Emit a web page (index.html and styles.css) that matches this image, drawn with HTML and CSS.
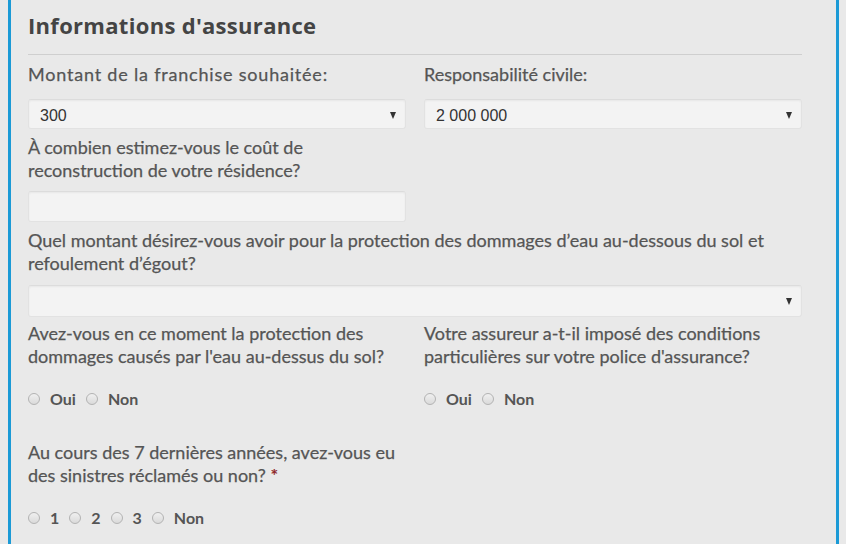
FILE: index.html
```html
<!DOCTYPE html>
<html lang="fr">
<head>
<meta charset="utf-8">
<title>Informations d'assurance</title>
<link rel="stylesheet" href="styles.css">
</head>
<body>
<div class="panel">
  <h2 class="title">Informations d'assurance</h2>
  <div class="rule"></div>

  <div class="row top">
    <div class="col">
      <label class="lbl wide-lbl">Montant de la franchise souhaitée:</label>
      <div class="select first"><span class="val">300</span></div>
    </div>
    <div class="col">
      <label class="lbl">Responsabilité civile:</label>
      <div class="select first"><span class="val">2 000 000</span></div>
    </div>
  </div>

  <div class="row">
    <div class="col">
      <label class="lbl">À combien estimez-vous le coût de reconstruction de votre résidence?</label>
      <div class="input"></div>
    </div>
    <div class="col"></div>
  </div>

  <div class="full">
    <label class="lbl">Quel montant désirez-vous avoir pour la protection des dommages d’eau au-dessous du sol et refoulement d’égout?</label>
    <div class="select wide"><span class="val"></span></div>
  </div>

  <div class="row">
    <div class="col">
      <label class="lbl">Avez-vous en ce moment la protection des dommages causés par l'eau au-dessus du sol?</label>
      <div class="radios">
        <span class="opt"><span class="dot"></span>Oui</span>
        <span class="opt"><span class="dot"></span>Non</span>
      </div>
    </div>
    <div class="col">
      <label class="lbl">Votre assureur a-t-il imposé des conditions particulières sur votre police d'assurance?</label>
      <div class="radios">
        <span class="opt"><span class="dot"></span>Oui</span>
        <span class="opt"><span class="dot"></span>Non</span>
      </div>
    </div>
  </div>

  <div class="row">
    <div class="col">
      <label class="lbl">Au cours des 7 dernières années, avez-vous eu des sinistres réclamés ou non? <span class="req">*</span></label>
      <div class="radios">
        <span class="opt"><span class="dot"></span>1</span>
        <span class="opt"><span class="dot"></span>2</span>
        <span class="opt"><span class="dot"></span>3</span>
        <span class="opt"><span class="dot"></span>Non</span>
      </div>
    </div>
    <div class="col"></div>
  </div>
</div>
</body>
</html>
```

FILE: styles.css
```css
html, body {
  background: #e9e9e9;
}
body {
  margin: 0 7px 0 8px;
  font-family: "Lato", "Liberation Sans", sans-serif;
}
.panel {
  border-left: 3px solid #1b9ad6;
  border-right: 3px solid #1b9ad6;
  padding: 10px 34px 40px 17px;
  min-height: 544px;
  box-sizing: border-box;
  background: #e9e9e9;
}
.title {
  margin: 0;
  font-family: "Open Sans", "Liberation Sans", sans-serif;
  font-weight: 700;
  font-size: 22px;
  line-height: 30px;
  letter-spacing: 0.3px;
  color: #444;
}
.rule {
  height: 1px;
  background: #cfcfcf;
  margin-top: 14px;
}
.row {
  display: grid;
  grid-template-columns: 1fr 1fr;
  column-gap: 18px;
}
.col {
  display: flex;
  flex-direction: column;
}
.lbl {
  display: block;
  margin-top: 7px;
  font-size: 18px;
  line-height: 23px;
  color: #555;
  -webkit-text-stroke: 0.25px #555;
}
.row.top .lbl {
  margin-top: 8px;
}
.wide-lbl {
  letter-spacing: 0.8px;
}
.req {
  color: #8b1a1a;
  -webkit-text-stroke: 0.25px #8b1a1a;
}
.select {
  position: relative;
  height: 30px;
  box-sizing: border-box;
  border: 1px solid #e2e2e2;
  border-top-color: #dcdcdc;
  border-radius: 3px;
  background: #f3f3f3;
  box-shadow: inset 0 1px 2px rgba(0,0,0,0.05);
  display: flex;
  align-items: center;
  padding: 3px 0 0 11px;
}
.select.first {
  margin-top: 13px;
}
.select.wide {
  margin-top: 10px;
  height: 32px;
  margin-bottom: -2px;
}
.select::after {
  content: "";
  position: absolute;
  right: 9px;
  top: 12px;
  border-left: 3.5px solid transparent;
  border-right: 3.5px solid transparent;
  border-top: 7px solid #333;
}
.val {
  font-family: "Liberation Sans", Arial, sans-serif;
  font-size: 16px;
  color: #333;
}
.input {
  margin-top: 9px;
  height: 31px;
  box-sizing: border-box;
  border: 1px solid #e2e2e2;
  border-top-color: #dcdcdc;
  border-radius: 3px;
  background: #f3f3f3;
  box-shadow: inset 0 1px 2px rgba(0,0,0,0.05);
}
.radios {
  display: flex;
  align-items: center;
  margin-top: 20px;
  margin-bottom: 26px;
  height: 20px;
}
.opt {
  display: flex;
  align-items: center;
  font-size: 16px;
  font-weight: 700;
  color: #555;
  margin-right: 10px;
}
.dot {
  width: 12px;
  height: 12px;
  box-sizing: border-box;
  border-radius: 50%;
  border: 1px solid #b3b3b3;
  background: linear-gradient(#f0f0f0, #dadada);
  margin: 2px 10px 0 0;
}
```
